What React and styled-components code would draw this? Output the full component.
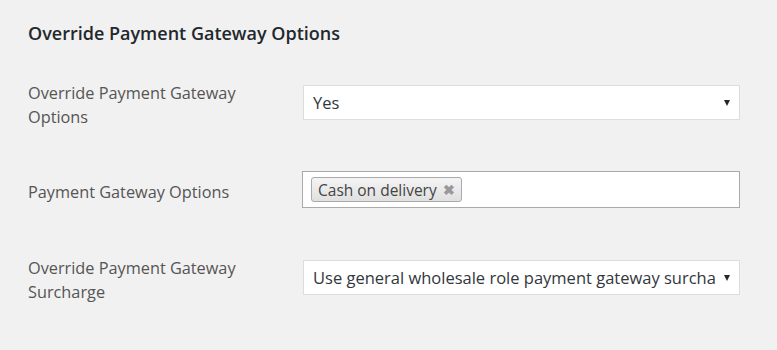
import React from 'react';
import styled, { createGlobalStyle } from 'styled-components';

const GlobalStyle = createGlobalStyle`
    html, body {
        margin: 0;
        padding: 0;
        background: #f1f1f1;
    }
    body {
        font-family: "Open Sans", "Noto Sans", sans-serif;
        color: #23282d;
    }
`;

const Page = styled.div`
    width: 777px;
    height: 350px;
    padding: 21px 37px 0 28px;
    box-sizing: border-box;
`;

const Title = styled.h2`
    margin: 0 0 36px;
    font-size: 18px;
    font-weight: 600;
    line-height: 24px;
    color: #23282d;
`;

const Row = styled.div`
    display: grid;
    grid-template-columns: 275px 437px;
    align-items: ${(props) => props.$align || 'start'};
    height: ${(props) => props.$height || 87}px;
`;

const Label = styled.div`
    font-size: 16.3px;
    line-height: 24px;
    color: #555;
    width: 225px;
    padding-top: ${(props) => props.$offset || 0}px;
`;

const SelectBox = styled.div`
    position: relative;
    height: 35px;
    margin-top: 4px;
    background: #fff;
    border: 1px solid #ddd;
    box-sizing: border-box;
    display: flex;
    align-items: center;
    padding: 0 24px 0 9px;
    font-size: 16.5px;
    color: #32373c;
`;

const SelectText = styled.span`
    flex: 1;
    min-width: 0;
    white-space: nowrap;
    overflow: hidden;
`;

const Arrow = styled.span`
    position: absolute;
    right: 9px;
    top: 50%;
    margin-top: -3px;
    width: 0;
    height: 0;
    border-left: 3px solid transparent;
    border-right: 3px solid transparent;
    border-top: 6px solid #23282d;
`;

const MultiBox = styled.div`
    height: 37px;
    margin: 3px 0 0 -1px;
    background: #fff;
    border: 1px solid #aaa;
    box-sizing: border-box;
    display: flex;
    align-items: center;
    padding: 0 8px;
`;

const Tag = styled.span`
    display: inline-flex;
    align-items: center;
    gap: 6px;
    height: 25px;
    padding: 0 6px;
    box-sizing: border-box;
    border: 1px solid #aaa;
    border-radius: 3px;
    background: linear-gradient(#f4f4f4, #e8e8e8 60%, #e0e0e0);
    font-size: 15.5px;
    color: #444;
`;

const Remove = styled.span`
    font-size: 14px;
    font-weight: 700;
    color: #999;
    line-height: 1;
`;

export default function App() {
    return (
        <>
            <GlobalStyle />
            <Page>
                <Title>Override Payment Gateway Options</Title>
                <Row>
                    <Label>Override Payment Gateway Options</Label>
                    <SelectBox>
                        <SelectText>Yes</SelectText>
                        <Arrow />
                    </SelectBox>
                </Row>
                <Row $height={88}>
                    <Label $offset={12}>Payment Gateway Options</Label>
                    <MultiBox>
                        <Tag>
                            Cash on delivery
                            <Remove>✖</Remove>
                        </Tag>
                    </MultiBox>
                </Row>
                <Row>
                    <Label>Override Payment Gateway Surcharge</Label>
                    <SelectBox>
                        <SelectText>Use general wholesale role payment gateway surcharge</SelectText>
                        <Arrow />
                    </SelectBox>
                </Row>
            </Page>
        </>
    );
}
